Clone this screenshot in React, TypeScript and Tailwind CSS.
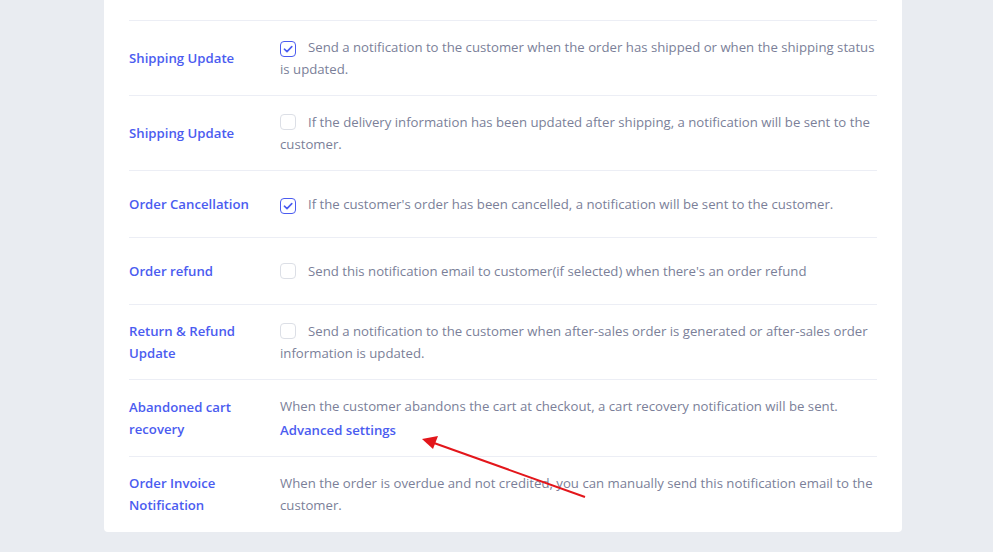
import React from 'react';

interface Row {
  label: string;
  text: string;
  checked?: boolean;
  checkbox?: boolean;
  link?: string;
}

const rows: Row[] = [
  {
    label: 'Shipping Update',
    text: 'Send a notification to the customer when the order has shipped or when the shipping status is updated.',
    checkbox: true,
    checked: true,
  },
  {
    label: 'Shipping Update',
    text: 'If the delivery information has been updated after shipping, a notification will be sent to the customer.',
    checkbox: true,
  },
  {
    label: 'Order Cancellation',
    text: "If the customer's order has been cancelled, a notification will be sent to the customer.",
    checkbox: true,
    checked: true,
  },
  {
    label: 'Order refund',
    text: "Send this notification email to customer(if selected) when there's an order refund",
    checkbox: true,
  },
  {
    label: 'Return & Refund Update',
    text: 'Send a notification to the customer when after-sales order is generated or after-sales order information is updated.',
    checkbox: true,
  },
  {
    label: 'Abandoned cart recovery',
    text: 'When the customer abandons the cart at checkout, a cart recovery notification will be sent.',
    link: 'Advanced settings',
  },
  {
    label: 'Order Invoice Notification',
    text: 'When the order is overdue and not credited, you can manually send this notification email to the customer.',
  },
];

const Checkbox: React.FC<{ checked?: boolean }> = ({ checked }) => (
  <span
    className={`mr-3 inline-flex size-4 translate-y-[3px] items-center justify-center rounded-[4px] border bg-white align-baseline ${
      checked ? 'border-[#4b5cf0]' : 'border-[#dcdfe6]'
    }`}
  >
    {checked && (
      <svg viewBox="0 0 12 12" className="size-[12px]" fill="none">
        <path d="M2.4 6.2 L5 8.6 L9.8 3.6" stroke="#4b5cf0" strokeWidth="1.6" strokeLinecap="round" strokeLinejoin="round" />
      </svg>
    )}
  </span>
);

export default function App() {
  return (
    <div className="relative h-[552px] w-[993px] overflow-hidden bg-[#e9ecf1] font-['Open_Sans','Noto_Sans',sans-serif]">
      <div className="ml-[104px] w-[798px] rounded-b-[4px] bg-white px-[25px] pb-px pt-[20px]">
        {rows.map((row, i) => (
          <div
            key={i}
            className="flex min-h-[67px] items-center border-t border-[#eceef5] py-[15px] text-[13.2px] leading-[22px]"
          >
            <div className="w-[151px] shrink-0 pr-4 font-semibold text-[#4b5cf0]">{row.label}</div>
            <div className="flex-1 text-[#7b7f99]">
              {row.checkbox && <Checkbox checked={row.checked} />}
              {row.text}
              {row.link && <div className="mt-[2px] font-semibold text-[#4b5cf0]">{row.link}</div>}
            </div>
          </div>
        ))}
      </div>

      <svg className="pointer-events-none absolute left-0 top-0" width="993" height="552">
        <line x1="585" y1="497" x2="434" y2="443" stroke="#e3161b" strokeWidth="2" />
        <polygon points="422,439 438,436 433,449" fill="#e3161b" />
      </svg>
    </div>
  );
}
